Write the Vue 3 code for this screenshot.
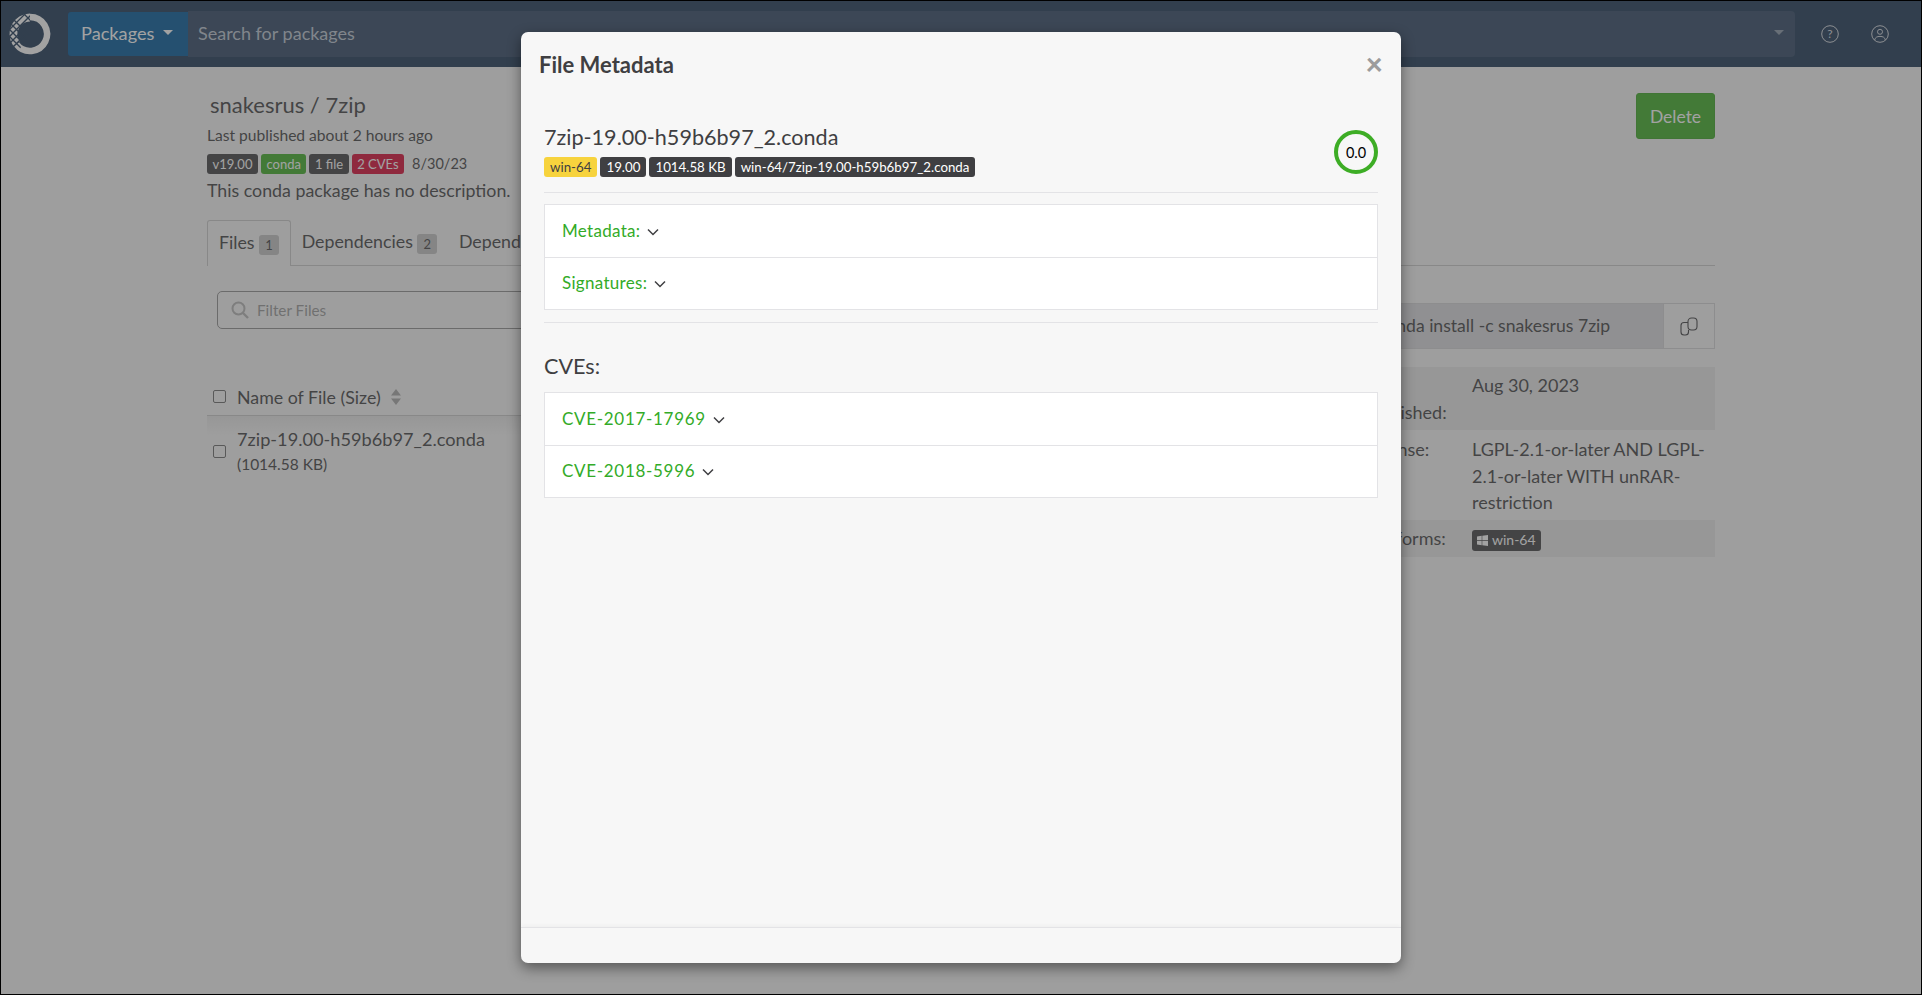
<script setup>
const fileBadges = [
  { text: 'win-64', cls: 'yellow' },
  { text: '19.00', cls: 'dark' },
  { text: '1014.58 KB', cls: 'dark' },
  { text: 'win-64/7zip-19.00-h59b6b97_2.conda', cls: 'dark' }
]
const meta = ['Metadata:', 'Signatures:']
const cves = ['CVE-2017-17969', 'CVE-2018-5996']
</script>

<template>
  <div class="app">
    <header class="nav">
      <svg class="logo" width="42" height="42" viewBox="0 0 42 42">
        <defs>
          <clipPath id="lat"><path d="M0 0H21V20L7 42H0z" /></clipPath>
        </defs>
        <path d="M21 4a17 17 0 1 1-13.500 27.300" fill="none" stroke="#fff" stroke-width="6.500" />
        <path d="M21 4.500a16.500 16.500 0 0 0-13.500 26" fill="none" stroke="#fff" stroke-width="8" />
        <g clip-path="url(#lat)" stroke="#1b3655" stroke-width="1.300" fill="none">
          <path d="M-4 14L18 -8M-4 21L24 -7M-4 28L24 0M-4 35L22 9M-4 42L16 22" />
          <path d="M-4 -2L22 24M-4 5L18 27M-4 12L18 34M-4 19L18 41M8 -6L24 10" />
        </g>
      </svg>
      <button class="pkg"><span class="pkg-label">Packages</span><span class="caret"></span></button>
      <div class="search">
        <span class="ph">Search for packages</span>
        <span class="caret dim"></span>
      </div>
      <svg class="nav-ic" width="18" height="18" viewBox="0 0 18 18">
        <circle cx="9" cy="9" r="8.300" fill="none" stroke="#d4d8dd" stroke-width="1" />
        <text x="9" y="13.300" text-anchor="middle" font-size="12" fill="#d4d8dd" font-family="Lato, sans-serif">?</text>
      </svg>
      <svg class="nav-ic user" width="18" height="18" viewBox="0 0 18 18">
        <circle cx="9" cy="9" r="8.300" fill="none" stroke="#d4d8dd" stroke-width="1" />
        <circle cx="9" cy="6.800" r="2.500" fill="none" stroke="#d4d8dd" stroke-width="1" />
        <path d="M3.600 15c.6-2.600 2.400-3.600 5.400-3.600s4.800 1 5.400 3.600" fill="none" stroke="#d4d8dd" stroke-width="1" />
      </svg>
    </header>

    <main class="page">
      <div class="head">
        <div>
          <h1 class="crumb">snakesrus / 7zip</h1>
          <div class="published">Last published about 2 hours ago</div>
          <div class="badges top-badges">
            <span class="badge dark">v19.00</span>
            <span class="badge green">conda</span>
            <span class="badge dark">1 file</span>
            <span class="badge red">2 CVEs</span>
            <span class="date">8/30/23</span>
          </div>
          <p class="desc">This conda package has no description.</p>
        </div>
        <button class="delete">Delete</button>
      </div>

      <nav class="tabs">
        <span class="tab active">Files <i>1</i></span>
        <span class="tab">Dependencies <i>2</i></span>
        <span class="tab">Dependents <i>0</i></span>
      </nav>

      <div class="cols">
        <section class="left">
          <div class="filter">
            <svg width="18" height="18" viewBox="0 0 18 18">
              <circle cx="7.500" cy="7.500" r="6" fill="none" stroke="#b5b5b5" stroke-width="2" />
              <path d="M12 12l5 5" stroke="#b5b5b5" stroke-width="2.400" />
            </svg>
            <span>Filter Files</span>
          </div>
          <div class="thead">
            <span class="check"></span>
            <span>Name of File (Size)</span>
            <svg width="12" height="16" viewBox="0 0 12 16">
              <path d="M6 0l5 6.500H1zM6 16L1 9.500h10z" fill="#a8a8a8" />
            </svg>
          </div>
          <div class="trow">
            <span class="check"></span>
            <div>
              <div class="fname">7zip-19.00-h59b6b97_2.conda</div>
              <div class="fsize">(1014.58 KB)</div>
            </div>
          </div>
        </section>

        <aside class="right">
          <div class="install">
            <span class="cmd">conda install -c snakesrus 7zip</span>
            <span class="copy">
              <svg width="18" height="19" viewBox="0 0 18 19">
                <rect x="8" y="1" width="9" height="12" rx="3.500" fill="none" stroke="#3f3f42" stroke-width="1.100" />
                <path d="M8 5.500H4a3 3 0 0 0-3 3V15a3 3 0 0 0 3 3h1.500a3 3 0 0 0 3-3v-2" fill="none" stroke="#3f3f42" stroke-width="1.100" />
              </svg>
            </span>
          </div>
          <div class="facts">
            <div class="fact shade pub"><span class="lab">Last<br />published:</span><span class="val">Aug 30, 2023</span></div>
            <div class="fact lic"><span class="lab">License:</span><span class="val">LGPL-2.1-or-later AND LGPL-2.1-or-later WITH unRAR-restriction</span></div>
            <div class="fact shade plat">
              <span class="lab">Platforms:</span>
              <span class="val">
                <span class="badge dark win">
                  <svg width="11" height="11" viewBox="0 0 11 11"><path d="M0 1.500l4.700-.7v4.300H0zM5.300.7L11 0v5.100H5.300zM0 5.700h4.700v4.500L0 9.500zM5.300 5.700H11V11l-5.700-.8z" fill="#fff" /></svg>
                  win-64
                </span>
              </span>
            </div>
          </div>
        </aside>
      </div>
    </main>

    <div class="backdrop">
      <div class="modal">
        <div class="m-head">
          <h2>File Metadata</h2>
          <span class="close">×</span>
        </div>
        <div class="m-body">
          <div class="file">
            <div>
              <div class="file-name">7zip-19.00-h59b6b97_2.conda</div>
              <div class="badges m-badges">
                <span v-for="b in fileBadges" :key="b.text" class="badge" :class="b.cls">{{ b.text }}</span>
              </div>
            </div>
            <div class="score">0.0</div>
          </div>
          <ul class="list first">
            <li v-for="m in meta" :key="m">
              <span class="link">{{ m }}</span>
              <svg class="chev" width="12" height="8" viewBox="0 0 12 8"><path d="M1 1.500l5 5 5-5" fill="none" stroke="#3f3f42" stroke-width="1.500" /></svg>
            </li>
          </ul>
          <hr />
          <h3>CVEs:</h3>
          <ul class="list">
            <li v-for="c in cves" :key="c">
              <span class="link cve">{{ c }}</span>
              <svg class="chev" width="12" height="8" viewBox="0 0 12 8"><path d="M1 1.500l5 5 5-5" fill="none" stroke="#3f3f42" stroke-width="1.500" /></svg>
            </li>
          </ul>
        </div>
        <div class="m-foot"></div>
      </div>
    </div>
  </div>
</template>

<style>
html, body { margin: 0; padding: 0; background: #f7f7f7; }
</style>

<style scoped>
.app {
  position: relative;
  height: 995px;
  box-sizing: border-box;
  border: 1px solid #000;
  overflow: hidden;
  background: #f7f7f7;
  color: #3f3f42;
  font-family: Lato, "Noto Sans", sans-serif;
  font-size: 16px;
}
.nav {
  height: 66px;
  background: #1b3655;
  display: flex;
  align-items: center;
  padding: 0 32px 0 8px;
  box-sizing: border-box;
}
.logo { margin-right: 17px; flex: none; }
.pkg {
  width: 120px;
  height: 44px;
  background: #005899;
  border: 0;
  border-radius: 3px 0 0 3px;
  color: #fff;
  font: inherit;
  font-size: 18.200px;
  display: flex;
  align-items: center;
  padding: 0 0 0 13px;
}
.pkg-label { margin-top: -2px; }
.caret {
  display: inline-block;
  border-top: 5px solid #fff;
  border-left: 5px solid transparent;
  border-right: 5px solid transparent;
  margin-left: 9px;
  margin-bottom: 3px;
}
.search {
  flex: 1;
  height: 46px;
  background: #2f4764;
  border-radius: 0 4px 4px 0;
  display: flex;
  align-items: center;
  justify-content: space-between;
  padding: 0 11px 0 10px;
  font-size: 18px;
  color: #bcc5d2;
}
.ph { margin-top: -2px; }
.caret.dim { border-top-color: #8a97a8; }
.nav-ic { margin-left: 26px; flex: none; }
.nav-ic.user { margin-left: 32px; }

.page { padding: 0 206px; }
.head { display: flex; justify-content: space-between; align-items: flex-start; padding-top: 25px; height: 153px; box-sizing: border-box; }
.crumb { margin: 0 0 0 3px; font-size: 22px; font-weight: 400; line-height: 25px; }
.published { font-size: 15.600px; line-height: 20px; margin-top: 8px; }
.badges { display: flex; align-items: center; gap: 3px; margin-top: 9px; }
.badge {
  display: inline-flex;
  align-items: center;
  height: 20px;
  padding: 0 6px;
  border-radius: 3px;
  font-size: 13.300px;
  color: #fff;
  white-space: nowrap;
}
.top-badges .badge { font-size: 13px; padding: 0 5.500px; }
.dark { background: #3f3f42; }
.green { background: #3dad25; }
.red { background: #d80a33; }
.yellow { background: #f7d33d; color: #3f3f42; }
.date { font-size: 14.500px; line-height: 16px; margin-left: 5px; }
.desc { margin: 5px 0 0; font-size: 17.800px; line-height: 22px; }
.delete {
  margin-top: 1px;
  width: 79px;
  height: 46px;
  background: #3dad25;
  border: 1px solid #3aa323;
  border-radius: 3px;
  color: #fff;
  font: inherit;
  font-size: 17.500px;
  padding: 0;
}
.tabs {
  display: flex;
  height: 46px;
  box-sizing: border-box;
  border-bottom: 1px solid #cacaca;
  font-size: 17.800px;
  line-height: 43px;
}
.tab { padding: 0 11px; white-space: nowrap; }
.tab.active {
  border: 1px solid #cacaca;
  border-bottom: 0;
  background: #f7f7f7;
  border-radius: 3px 3px 0 0;
  height: 46px;
  box-sizing: border-box;
}
.tab i {
  display: inline-block;
  font-style: normal;
  font-size: 13px;
  background: #c4c4c4;
  padding: 0 6px;
  line-height: 20px;
  border-radius: 3px;
  vertical-align: -1px;
}
.cols { display: grid; grid-template-columns: 1fr 349px; column-gap: 24px; }
.filter {
  margin: 25px 0 0 10px;
  height: 38px;
  border: 1px solid #8f8f8f;
  border-radius: 5px;
  box-sizing: border-box;
  display: flex;
  align-items: center;
  gap: 8px;
  padding-left: 13px;
  font-size: 15.300px;
  color: #9a9a9a;
}
.thead {
  margin-top: 41px;
  height: 46px;
  padding-top: 8px;
  border-bottom: 1px solid #cacaca;
  box-sizing: border-box;
  display: flex;
  align-items: center;
  padding-left: 6px;
  font-size: 17.800px;
}
.thead svg { margin-left: 9px; }
.check {
  width: 13px;
  height: 13px;
  box-sizing: border-box;
  border: 1px solid #6a6a6a;
  border-radius: 2px;
  background: #f7f7f7;
  margin-right: 11px;
  flex: none;
}
.trow {
  display: flex;
  align-items: center;
  padding: 10px 0 0 6px;
  background: linear-gradient(#e8e8e8, #f7f7f7 20px);
  height: 60px;
  box-sizing: border-box;
}
.fname { font-size: 18.200px; line-height: 26px; }
.fsize { font-size: 15.500px; line-height: 25px; }
.install {
  margin-top: 37px;
  height: 46px;
  display: flex;
  border: 1px solid #d4d4d6;
  box-sizing: border-box;
}
.cmd { flex: 1; background: #dadbde; line-height: 44px; padding-left: 11px; font-size: 17.600px; white-space: nowrap; overflow: hidden; }
.copy { width: 50px; display: flex; align-items: center; justify-content: center; border-left: 1px solid #d4d4d6; }
.facts { margin-top: 18px; font-size: 18px; line-height: 26.500px; }
.fact { display: grid; grid-template-columns: 106px 1fr; }
.shade { background: #e9e9e9; }
.pub { height: 63px; padding-top: 5px; box-sizing: border-box; }
.lic { height: 90px; padding-top: 6px; box-sizing: border-box; }
.plat { height: 37px; padding-top: 5px; box-sizing: border-box; }
.lab { white-space: nowrap; }
.win { gap: 4px; height: 21px; margin-top: 5px; padding: 0 5px; font-size: 14px; }

.backdrop {
  position: absolute;
  inset: 0;
  background: rgba(72, 72, 72, .51);
  display: flex;
  justify-content: center;
  padding-top: 31px;
  pointer-events: none;
}
.modal {
  width: 880px;
  height: 931px;
  background: #f7f7f7;
  border-radius: 7px;
  box-shadow: 0 5px 14px rgba(0,0,0,.45);
  display: flex;
  flex-direction: column;
}
.m-head { height: 66px; display: flex; justify-content: space-between; align-items: center; padding: 0 18px 2px 18px; box-sizing: border-box; flex: none; }
.m-head h2 { margin: 0; font-size: 22px; font-weight: 700; }
.close { font-size: 30px; font-weight: 900; color: #9c9c9c; line-height: 1; margin-top: -3px; }
.m-body { flex: 1; padding: 22px 23px 0; }
.file {
  display: flex;
  justify-content: space-between;
  align-items: flex-start;
  height: 73px;
  box-sizing: border-box;
  border-bottom: 1px solid #e3e3e6;
}
.file-name { font-size: 21.600px; line-height: 34px; }
.m-badges { margin-top: 3px; }
.score {
  width: 44px;
  height: 44px;
  margin-top: 10px;
  box-sizing: border-box;
  border: 4px solid #3dad25;
  border-radius: 50%;
  color: #000;
  font-size: 14.500px;
  display: flex;
  align-items: center;
  justify-content: center;
}
.list { list-style: none; margin: 11px 0 0; padding: 0; background: #fff; border: 1px solid #e3e3e6; }
.list li { height: 52px; box-sizing: border-box; display: flex; align-items: center; padding-left: 17px; }
.list li + li { border-top: 1px solid #e3e3e6; }
.link { color: #33ab28; font-size: 17px; letter-spacing: .3px; margin-top: -2px; }
.cve { letter-spacing: .7px; }
.chev { margin-left: 7px; margin-top: 1px; }
hr { border: 0; border-top: 1px solid #e3e3e6; margin: 12px 0 0; }
h3 { margin: 28px 0 0; font-size: 21.600px; line-height: 30px; font-weight: 400; }
h3 + .list { margin-top: 11px; }
.m-foot { height: 36px; flex: none; border-top: 1px solid #e3e3e6; box-shadow: 0 -2px 4px rgba(0,0,0,.03); box-sizing: border-box; }
</style>
